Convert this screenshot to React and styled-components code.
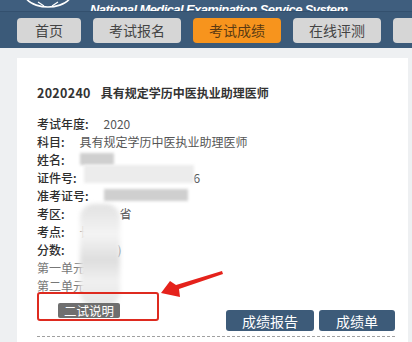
import React from 'react'
import styled, { createGlobalStyle } from 'styled-components'

const GlobalStyle = createGlobalStyle`
    html, body {
        margin: 0;
        padding: 0;
        background: #eef0f2;
        font-family: "Noto Sans CJK SC", "Noto Sans", sans-serif;
        overflow: hidden;
    }
`

const navItems = ['首页', '考试报名', '考试成绩', '在线评测', '']

const rows = [
    { label: '考试年度:', value: '2020' },
    { label: '科目:', value: '具有规定学历中医执业助理医师' },
    { label: '姓名:', mask: 'gray', w: 34 },
    { label: '证件号:', mask: 'light', w: 110, tail: '6' },
    { label: '准考证号:', mask: 'gray', w: 84 },
    { label: '考区:', value: '省', pad: 40 },
    { label: '考点:', value: '长', pad: 0 },
    { label: '分数:', value: ')', pad: 38 },
    { label: '第一单元:', light: true },
    { label: '第二单元:', light: true },
]

const App = () => {
    return (
        <>
            <GlobalStyle />
            <Header>
                <Logo width="48" height="11" viewBox="0 0 48 11">
                    <path d="M2 0 C6 7, 18 9, 24 9 C30 9, 42 7, 46 0" fill="none" stroke="#fff" strokeWidth="1.6" />
                    <path d="M14 4 L20 8 M34 4 L28 8" stroke="#fff" strokeWidth="1.2" />
                </Logo>
                <Tagline>National Medical Examination Service System</Tagline>
            </Header>
            <Nav>
                {navItems.map((item, i) => (
                    <NavButton key={i} $active={i === 2} $narrow={i === 0}>{item}</NavButton>
                ))}
            </Nav>
            <Main>
                <Card>
                    <Title>2020240<span>具有规定学历中医执业助理医师</span></Title>
                    {rows.map((r, i) => (
                        <Row key={i}>
                            <Label $light={r.light}>{r.label}</Label>
                            {r.value && <Value style={{ paddingLeft: r.pad || 0 }}>{r.value}</Value>}
                            {r.mask && <Mask $tone={r.mask} style={{ width: r.w }} />}
                            {r.tail && <Value>{r.tail}</Value>}
                        </Row>
                    ))}
                    <Blob />
                    <Arrow width="64" height="30" viewBox="0 0 64 30">
                        <polygon points="0,23 9,11 15,15 61,1 62,4 18,19 19,27" fill="#e5221b" />
                    </Arrow>
                    <NoteRow>
                        <Highlight>
                            <GrayButton>二试说明</GrayButton>
                        </Highlight>
                    </NoteRow>
                    <Actions>
                        <ActionButton>成绩报告</ActionButton>
                        <ActionButton $small>成绩单</ActionButton>
                    </Actions>
                    <Divider />
                </Card>
            </Main>
        </>
    )
}

const Header = styled.div`
    height: 11px;
    background: #3f5e7e;
    border-bottom: 1px solid #33506e;
    display: flex;
    align-items: flex-end;
    overflow: hidden;
    padding-left: 24px;
`

const Logo = styled.svg`
    display: block;
    margin-bottom: 2px;
`

const Tagline = styled.div`
    margin-left: 18px;
    margin-bottom: -6px;
    color: #fff;
    font-family: "Liberation Sans", Arial, sans-serif;
    font-style: italic;
    font-weight: bold;
    font-size: 13px;
    letter-spacing: -0.6px;
    white-space: nowrap;
`

const Nav = styled.div`
    height: 36px;
    background: #3b5a79;
    display: flex;
    align-items: center;
    gap: 12px;
    padding-left: 17px;
    overflow: hidden;
`

const NavButton = styled.div`
    flex: none;
    width: ${({ $narrow }) => ($narrow ? '64px' : '88px')};
    height: 25px;
    border-radius: 4px;
    background: ${({ $active }) => ($active ? '#f7941d' : '#d6d6d6')};
    color: ${({ $active }) => ($active ? '#5b3a12' : '#444')};
    font-size: 14px;
    display: flex;
    align-items: center;
    justify-content: center;
`

const Main = styled.div`
    padding: 10px 4px 0 17px;
`

const Card = styled.div`
    position: relative;
    background: #fff;
    padding: 26px 13px 0 20px;
    height: 258px;
    overflow: hidden;
`

const Title = styled.div`
    font-size: 12.5px;
    font-weight: bold;
    color: #333;
    line-height: 18px;
    margin-bottom: 12px;
    letter-spacing: 0.3px;

    span {
        margin-left: 10px;
        letter-spacing: 0;
        font-size: 12px;
    }
`

const Row = styled.div`
    display: flex;
    align-items: center;
    height: 18px;
    font-size: 12px;
`

const Label = styled.span`
    color: ${({ $light }) => ($light ? '#777' : '#2e2e2e')};
    font-weight: ${({ $light }) => ($light ? 400 : 500)};
    margin-right: 15px;
    white-space: nowrap;
`

const Value = styled.span`
    color: #555;
    white-space: nowrap;
`

const Mask = styled.span`
    display: inline-block;
    height: ${({ $tone }) => ($tone === 'light' ? '18px' : '12px')};
    margin-left: ${({ $tone }) => ($tone === 'light' ? '-8px' : '0')};
    margin-top: ${({ $tone }) => ($tone === 'light' ? '-6px' : '0')};
    background: ${({ $tone }) => ($tone === 'light' ? '#ececec' : '#cfcfcf')};
    filter: blur(1.5px);
`

const Blob = styled.div`
    position: absolute;
    left: 63px;
    top: 146px;
    width: 40px;
    height: 102px;
    border-radius: 14px;
    background: linear-gradient(180deg, #e2e2e2 0%, #f4f4f4 30%, #dedede 55%, #f0f0f0 75%, #e6e6e6 100%);
    filter: blur(2px);
`

const Arrow = styled.svg`
    position: absolute;
    left: 144px;
    top: 212px;
`

const NoteRow = styled.div`
    padding: 3px 0 0 21px;
    height: 13px;
`

const Highlight = styled.span`
    position: relative;
    display: inline-block;

    &::after {
        content: '';
        position: absolute;
        left: -21px;
        top: -5px;
        width: 118px;
        height: 25px;
        border: 2px solid #de2a1f;
        border-radius: 3px;
    }
`

const GrayButton = styled.span`
    display: inline-block;
    width: 62px;
    height: 15px;
    line-height: 15px;
    background: #6f6f6f;
    color: #fff;
    font-size: 12.5px;
    text-align: center;
    border-radius: 2px;
`

const Actions = styled.div`
    display: flex;
    justify-content: flex-end;
    gap: 5px;
`

const ActionButton = styled.div`
    width: ${({ $small }) => ($small ? '76px' : '88px')};
    height: 21px;
    border-radius: 3px;
    background: #3d5b79;
    color: #fff;
    font-size: 14px;
    display: flex;
    align-items: center;
    justify-content: center;
`

const Divider = styled.div`
    margin-top: 5px;
    border-top: 1px dashed #a0a0a0;
`

export default App
